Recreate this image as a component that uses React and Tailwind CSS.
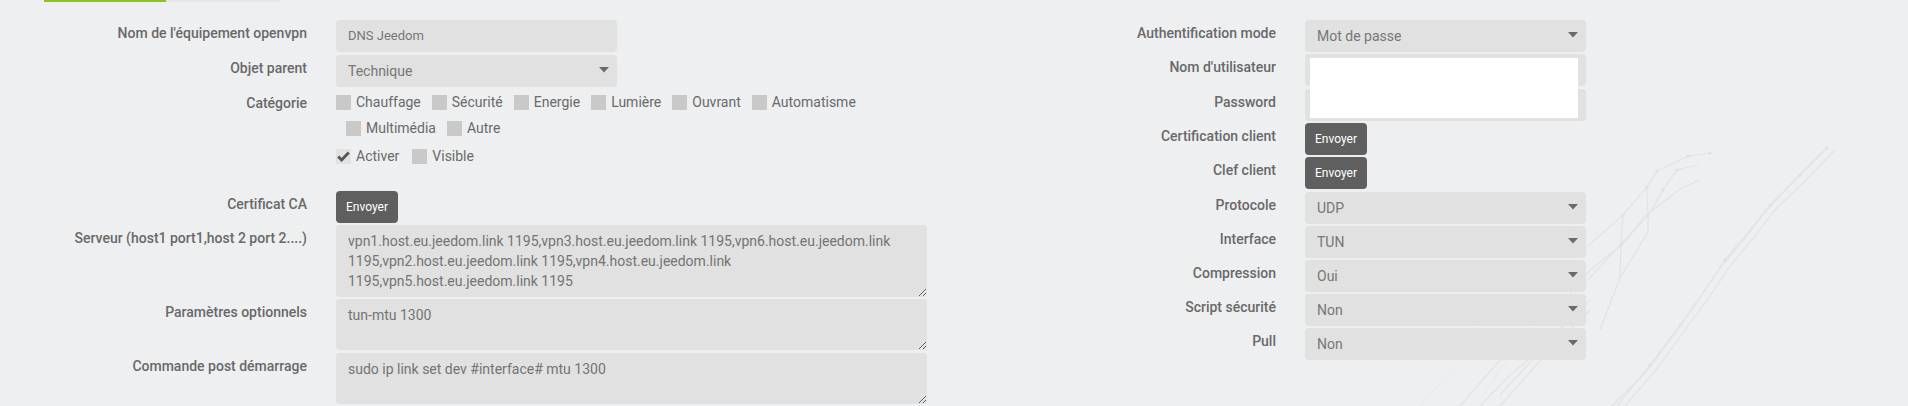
import React from "react";

const Label = ({ children, w }) => (
  <div
    className={`${w} shrink-0 text-right pt-[3px] text-[14px] leading-5 font-medium text-[#696969]`}
  >
    {children}
  </div>
);

const Arrow = () => (
  <svg width="10" height="6" viewBox="0 0 10 6" className="absolute right-[8px] top-[12px]">
    <path d="M0 0 L10 0 L5 5.5 Z" fill="#6a6a6a" />
  </svg>
);

const Field = ({ value, select, w = "w-[281px]" }) => (
  <div
    className={`relative ${w} h-[32px] rounded-[4px] bg-[#e0e1e0] pl-[12px] flex items-center ${
      select ? "text-[14px]" : "text-[13px]"
    } text-[#777777]`}
  >
    {value}
    {select && <Arrow />}
  </div>
);

const Box = ({ checked }) =>
  checked ? (
    <span className="w-[15px] h-[15px] bg-[#e1e2e1] flex items-center justify-center shrink-0">
      <svg width="13" height="11" viewBox="0 0 13 11">
        <path d="M1.2 5.6 L4.6 9 L11.8 1.6" stroke="#555" strokeWidth="2.8" fill="none" />
      </svg>
    </span>
  ) : (
    <span className="w-[15px] h-[15px] bg-[#c9c9c9] shrink-0" />
  );

const Check = ({ label, checked, mr = "mr-[11px]" }) => (
  <span className={`flex items-center ${mr}`}>
    <Box checked={checked} />
    <span className="ml-[5px] text-[14px] text-[#6a6a6a]">{label}</span>
  </span>
);

const Button = () => (
  <div className="w-[62px] h-[32px] rounded-[4px] bg-[#5f5f5f] text-white text-[12px] flex items-center justify-center">
    Envoyer
  </div>
);

const TA = ({ value, h }) => (
  <textarea
    readOnly
    defaultValue={value}
    className={`block w-[591px] ${h} rounded-[4px] bg-[#e0e1e0] px-[12px] pt-[6px] text-[14px] leading-5 text-[#747474] overflow-hidden outline-none`}
  />
);

const LRow = ({ label, children, mt }) => (
  <div className={`flex gap-[29px] ${mt}`}>
    <Label w="w-[307px]">{label}</Label>
    {children}
  </div>
);

const RRow = ({ label, children, mt }) => (
  <div className={`flex gap-[29px] ${mt}`}>
    <Label w="w-[322px]">{label}</Label>
    {children}
  </div>
);

const Deco = () => (
  <svg
    className="absolute left-0 top-0 pointer-events-none"
    width="1908"
    height="406"
    viewBox="0 0 1908 406"
  >
    <g stroke="#e2e3e6" strokeWidth="1.2" fill="none">
      <path d="M1587 247 L1623 215 L1647 187 L1657 171 L1688 156 L1710 153" />
      <path d="M1588 280 L1621 244 L1648 216 L1663 190 L1677 170 L1698 165" />
      <path d="M1565 300 L1590 270 L1623 244 L1645 216 L1680 189 L1700 180" />
      <path d="M1623 215 L1621 244 L1620 278" />
      <path d="M1647 187 L1648 216 L1648 232" />
      <path d="M1600 330 L1620 278 L1648 232" />
      <path d="M1827 148 L1800 175 L1770 205 L1750 230 L1725 260 L1705 290 L1680 325 L1650 365 L1617 406" />
      <path d="M1835 150 L1808 178 L1775 210 L1755 236 L1730 266 L1710 296 L1685 330 L1656 370 L1625 406" />
      <path d="M1822 152 L1795 180 L1765 212 L1745 238 L1720 268 L1700 298 L1676 332 L1646 372 L1612 406" />
      <path d="M1500 395 L1523 370 L1545 345 L1570 318 L1590 300" />
      <path d="M1480 406 L1510 375 L1540 350 L1565 325" />
      <path d="M1460 406 L1500 360 L1530 330" />
      <path d="M1500 406 L1530 372 L1560 340 L1590 310" />
    </g>
    <g stroke="#e8e9eb" strokeWidth="1" fill="none">
      <path d="M1470 340 L1500 300 L1540 260 L1580 220" />
      <path d="M1480 400 L1520 340 L1560 300" />
      <path d="M1420 406 L1460 360 L1500 330" />
    </g>
    <g fill="#dfe0e3">
      <circle cx="1710" cy="153" r="1.6" />
      <circle cx="1688" cy="156" r="1.6" />
      <circle cx="1657" cy="171" r="1.6" />
      <circle cx="1647" cy="187" r="1.6" />
      <circle cx="1623" cy="215" r="1.6" />
      <circle cx="1621" cy="244" r="1.6" />
      <circle cx="1648" cy="216" r="1.6" />
      <circle cx="1663" cy="190" r="1.6" />
      <circle cx="1677" cy="170" r="1.6" />
      <circle cx="1827" cy="148" r="1.6" />
      <circle cx="1800" cy="175" r="1.6" />
      <circle cx="1770" cy="205" r="1.6" />
      <circle cx="1725" cy="260" r="1.6" />
      <circle cx="1680" cy="325" r="1.6" />
      <circle cx="1650" cy="365" r="1.6" />
    </g>
  </svg>
);

export default function App() {
  return (
    <div className="relative w-[1908px] h-[406px] overflow-hidden bg-[#eeeff1] font-['Roboto','Liberation_Sans',sans-serif]">
      <Deco />
      <div className="relative flex h-[2px]">
        <div className="ml-[44px] w-[122px] bg-[#8cc31a]" />
        <div className="w-[114px] bg-[#e5e6e8]" />
      </div>
      <div className="relative flex pt-[18px]">
        {/* Left column */}
        <div className="w-[954px] shrink-0">
          <LRow label="Nom de l'équipement openvpn">
            <Field value="DNS Jeedom" />
          </LRow>
          <LRow label="Objet parent" mt="mt-[3px]">
            <Field value="Technique" select />
          </LRow>
          <LRow label="Catégorie" mt="mt-[3px]">
            <div className="pt-[2px]">
              <div className="flex h-[20px] items-center">
                <Check label="Chauffage" />
                <Check label="Sécurité" />
                <Check label="Energie" />
                <Check label="Lumière" />
                <Check label="Ouvrant" />
                <Check label="Automatisme" />
              </div>
              <div className="flex h-[20px] items-center mt-[6.5px] pl-[10px]">
                <Check label="Multimédia" />
                <Check label="Autre" />
              </div>
              <div className="flex h-[20px] items-center mt-[8px]">
                <Check label="Activer" checked mr="mr-[13px]" />
                <Check label="Visible" />
              </div>
            </div>
          </LRow>
          <LRow label="Certificat CA" mt="mt-[24.5px]">
            <Button />
          </LRow>
          <LRow label="Serveur (host1 port1,host 2 port 2....)" mt="mt-[2px]">
            <TA
              h="h-[72px]"
              value="vpn1.host.eu.jeedom.link 1195,vpn3.host.eu.jeedom.link 1195,vpn6.host.eu.jeedom.link 1195,vpn2.host.eu.jeedom.link 1195,vpn4.host.eu.jeedom.link 1195,vpn5.host.eu.jeedom.link 1195"
            />
          </LRow>
          <LRow label="Paramètres optionnels" mt="mt-[2px]">
            <TA h="h-[51px]" value="tun-mtu 1300" />
          </LRow>
          <LRow label="Commande post démarrage" mt="mt-[3px]">
            <TA h="h-[51px]" value="sudo ip link set dev #interface# mtu 1300" />
          </LRow>
        </div>

        {/* Right column */}
        <div className="relative flex-1">
          <RRow label="Authentification mode">
            <Field value="Mot de passe" select />
          </RRow>
          <RRow label="Nom d'utilisateur" mt="mt-[2px]">
            <Field value="" />
          </RRow>
          <RRow label="Password" mt="mt-[3px]">
            <Field value="" />
          </RRow>
          <RRow label="Certification client" mt="mt-[2px]">
            <Button />
          </RRow>
          <RRow label="Clef client" mt="mt-[2px]">
            <Button />
          </RRow>
          <RRow label="Protocole" mt="mt-[3px]">
            <Field value="UDP" select />
          </RRow>
          <RRow label="Interface" mt="mt-[2px]">
            <Field value="TUN" select />
          </RRow>
          <RRow label="Compression" mt="mt-[2px]">
            <Field value="Oui" select />
          </RRow>
          <RRow label="Script sécurité" mt="mt-[2px]">
            <Field value="Non" select />
          </RRow>
          <RRow label="Pull" mt="mt-[2px]">
            <Field value="Non" select />
          </RRow>
          <div className="absolute left-[356px] top-[38px] w-[268px] h-[60px] bg-white" />
        </div>
      </div>
    </div>
  );
}
